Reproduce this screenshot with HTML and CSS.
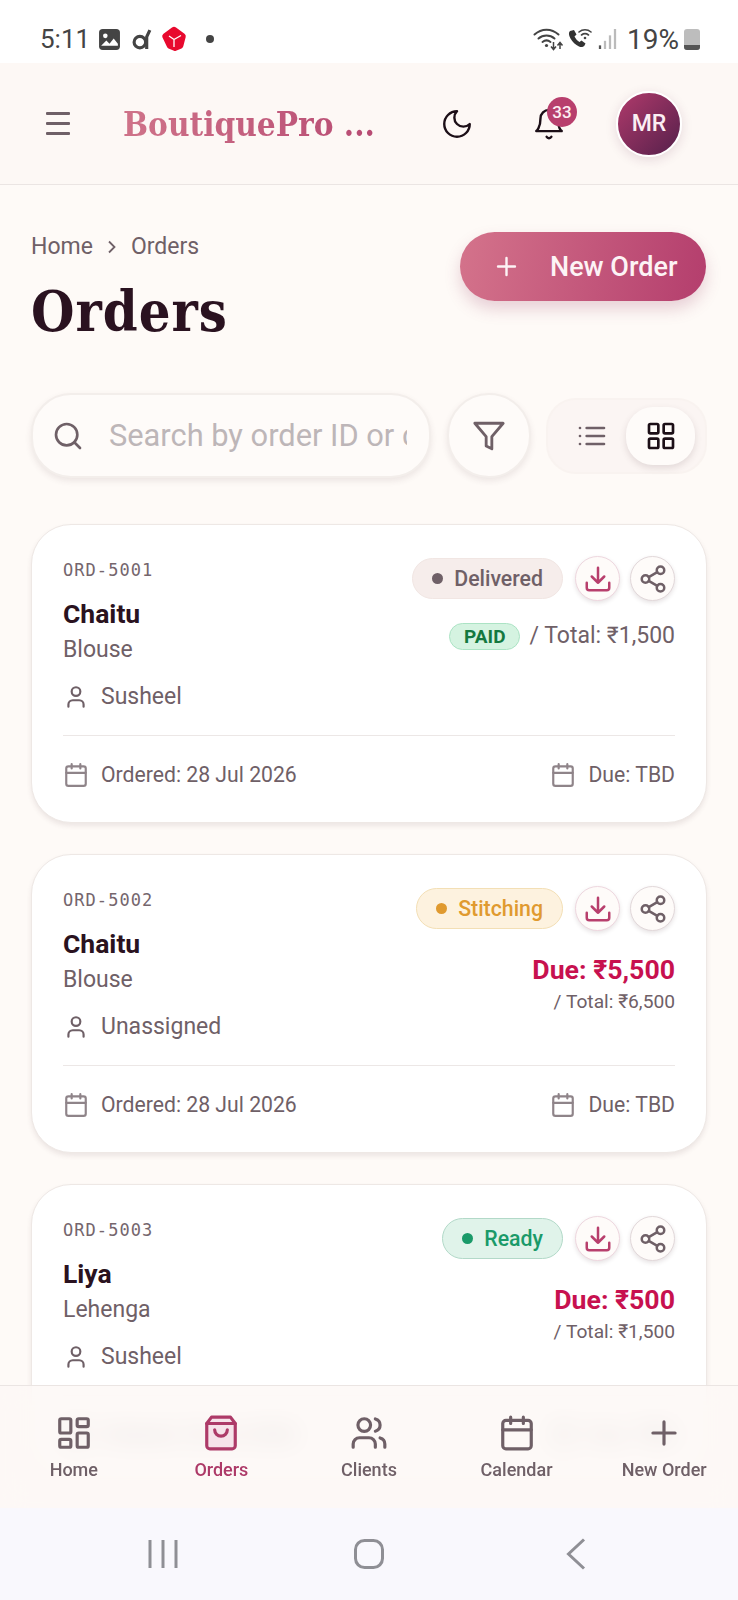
FILE: index.html
```html
<!DOCTYPE html>
<html lang="en">
<head>
    <meta charset="UTF-8">
    <meta name="viewport" content="width=device-width, initial-scale=1.0">
    <title>BoutiquePro - Orders</title>
    <link rel="stylesheet" href="styles.css">
</head>
<body>
    <!-- icon sprite -->
    <svg class="sprite" aria-hidden="true">
        <symbol id="i-moon" viewBox="0 0 24 24"><path d="M12 3a6 6 0 0 0 9 9 9 9 0 1 1-9-9Z"/></symbol>
        <symbol id="i-bell" viewBox="0 0 24 24"><path d="M6 8a6 6 0 0 1 12 0c0 7 3 9 3 9H3s3-2 3-9"/><path d="M10.3 21a1.94 1.94 0 0 0 3.4 0"/></symbol>
        <symbol id="i-search" viewBox="0 0 24 24"><circle cx="11" cy="11" r="8"/><path d="m21 21-4.3-4.3"/></symbol>
        <symbol id="i-filter" viewBox="0 0 24 24"><path d="M22 3H2l8 9.46V19l4 2v-8.54Z"/></symbol>
        <symbol id="i-list" viewBox="0 0 24 24"><path d="M3 12h.01M3 18h.01M3 6h.01M8 12h13M8 18h13M8 6h13"/></symbol>
        <symbol id="i-grid" viewBox="0 0 24 24"><rect x="3" y="3" width="7" height="7" rx="1"/><rect x="14" y="3" width="7" height="7" rx="1"/><rect x="14" y="14" width="7" height="7" rx="1"/><rect x="3" y="14" width="7" height="7" rx="1"/></symbol>
        <symbol id="i-user" viewBox="0 0 24 24"><path d="M19 21v-2a4 4 0 0 0-4-4H9a4 4 0 0 0-4 4v2"/><circle cx="12" cy="7" r="4"/></symbol>
        <symbol id="i-cal" viewBox="0 0 24 24"><path d="M8 2v4M16 2v4M3 10h18"/><rect x="3" y="4" width="18" height="18" rx="2"/></symbol>
        <symbol id="i-download" viewBox="0 0 24 24"><path d="M21 15v4a2 2 0 0 1-2 2H5a2 2 0 0 1-2-2v-4"/><path d="m7 10 5 5 5-5M12 15V3"/></symbol>
        <symbol id="i-share" viewBox="0 0 24 24"><circle cx="18" cy="5" r="3"/><circle cx="6" cy="12" r="3"/><circle cx="18" cy="19" r="3"/><path d="m8.59 13.51 6.83 3.98M15.41 6.51l-6.82 3.98"/></symbol>
        <symbol id="i-dash" viewBox="0 0 24 24"><rect x="3" y="3" width="7" height="9" rx="1"/><rect x="14" y="3" width="7" height="5" rx="1"/><rect x="14" y="12" width="7" height="9" rx="1"/><rect x="3" y="16" width="7" height="5" rx="1"/></symbol>
        <symbol id="i-bag" viewBox="0 0 24 24"><path d="M6 2 3 6v14a2 2 0 0 0 2 2h14a2 2 0 0 0 2-2V6l-3-4Z"/><path d="M3 6h18"/><path d="M16 10a4 4 0 0 1-8 0"/></symbol>
        <symbol id="i-users" viewBox="0 0 24 24"><path d="M16 21v-2a4 4 0 0 0-4-4H6a4 4 0 0 0-4 4v2"/><circle cx="9" cy="7" r="4"/><path d="M22 21v-2a4 4 0 0 0-3-3.87M16 3.13a4 4 0 0 1 0 7.75"/></symbol>
        <symbol id="i-plus" viewBox="0 0 24 24"><path d="M5 12h14M12 5v14"/></symbol>
    </svg>

    <div class="status-bar">
        <div class="status-left">
            <span class="status-time">5:11</span>
            <svg class="st-img" viewBox="0 0 22 22"><rect x="1" y="1" width="20" height="20" rx="3.5" fill="#444"/><circle cx="7" cy="7.5" r="2.2" fill="#fff"/><path d="M3 17l5-5 3 3 4-5 4 5v2H3z" fill="#fff"/></svg>
            <svg class="st-d" viewBox="0 0 20 20"><circle cx="7.5" cy="12.5" r="5.5" fill="none" stroke="#444" stroke-width="3"/><path d="M14 19V7.5L17 1" fill="none" stroke="#444" stroke-width="3"/></svg>
            <svg class="st-cube" viewBox="0 0 26 26"><path d="M11 1.500a3.400 3.400 0 0 1 4 0l8.500 6.200a3 3 0 0 1 1.200 3.200l-2.400 9.400a3 3 0 0 1-1.800 2.100l-5.500 2.300a3 3 0 0 1-2 0l-5.500-2.300a3 3 0 0 1-1.800-2.100L1.300 10.900a3 3 0 0 1 1.200-3.200z" fill="#e8092e"/><path d="M13 13.500V21M13 13.500l7-4M13 13.500 8 10" fill="none" stroke="#fff" stroke-width="1.300"/></svg>
            <span class="status-dot"></span>
        </div>
        <div class="status-right">
            <svg class="st-wifi" viewBox="0 0 30 24"><g fill="none" stroke="#444" stroke-width="2" stroke-linecap="round"><path d="M1 7.500c7-6.500 17-6.500 24 0"/><path d="M5 11.500c4.500-4 11.500-4 16 0"/><path d="M9 15c2.500-2 5.500-2 8 0"/></g><circle cx="13" cy="18.500" r="1.600" fill="#444"/><path d="M20 15v7m-2.500-2.500 2.500 3 2.500-3M26.500 22v-6m-2.500 2.500 2.500-3 2.500 3" fill="none" stroke="#444" stroke-width="1.500"/></svg>
            <svg class="st-call" viewBox="0 0 24 22"><path d="M2 3c-1.500 1.500-1.500 4 .5 7.500s5 6.500 8.500 8c2.500 1 4.500.5 5.500-1l1-2-4-3-2 1.500c-2-1-4-3.500-5-5.500l2-2-2.500-4.500z" fill="#333"/><g fill="none" stroke="#444" stroke-width="1.600" stroke-linecap="round"><path d="M11 4c3.500-3 8.500-3 12 0"/><path d="M13.500 7c2-1.500 5-1.500 7 0"/></g><circle cx="17" cy="10" r="1.300" fill="#444"/></svg>
            <svg class="st-signal" viewBox="0 0 19 22"><rect x="0" y="18" width="2.500" height="4" fill="#555"/><rect x="5.500" y="13" width="2.500" height="9" fill="#bbb"/><rect x="11" y="7" width="2.500" height="15" fill="#bbb"/><rect x="16.500" y="0" width="2.500" height="22" fill="#bbb"/></svg>
            <span class="status-batt">19%</span>
            <span class="battery"><span class="battery-low"></span></span>
        </div>
    </div>

    <header class="topbar">
        <button class="hamburger" aria-label="Menu"><span></span><span></span><span></span></button>
        <div class="brand">BoutiquePro ...</div>
        <button class="top-btn"><svg class="ic ic-34 dark thin"><use href="#i-moon"/></svg></button>
        <button class="top-btn bell">
            <svg class="ic ic-34 dark thin"><use href="#i-bell"/></svg>
            <span class="badge">33</span>
        </button>
        <div class="avatar">MR</div>
    </header>

    <div class="stage">
        <main class="content">
            <div class="page-head">
                <div>
                    <div class="crumbs">
                        Home
                        <svg class="crumb-sep" viewBox="0 0 10 14"><path d="M2 1.500 7.500 7 2 12.500"/></svg>
                        Orders
                    </div>
                    <h1>Orders</h1>
                </div>
                <button class="new-order"><svg class="ic ic-29"><use href="#i-plus"/></svg>New Order</button>
            </div>

            <div class="toolbar">
                <div class="search">
                    <svg class="ic ic-32"><use href="#i-search"/></svg>
                    <input class="search-input" type="text" placeholder="Search by order ID or client">
                </div>
                <button class="filter-btn"><svg class="ic ic-34"><use href="#i-filter"/></svg></button>
                <div class="view-toggle">
                    <span class="view-opt"><svg class="ic ic-32"><use href="#i-list"/></svg></span>
                    <span class="view-opt active"><svg class="ic ic-32 dark"><use href="#i-grid"/></svg></span>
                </div>
            </div>

            <section class="orders">
                <article class="card">
                    <div class="card-top">
                        <div class="card-info">
                            <div class="ord-id">ORD-5001</div>
                            <div class="client">Chaitu</div>
                            <div class="garment">Blouse</div>
                            <div class="assignee"><svg class="ic ic-26"><use href="#i-user"/></svg>Susheel</div>
                        </div>
                        <div class="card-side">
                            <div class="actions">
                                <span class="pill pill-delivered"><i></i>Delivered</span>
                                <button class="round dl"><svg class="ic ic-30"><use href="#i-download"/></svg></button>
                                <button class="round"><svg class="ic ic-30"><use href="#i-share"/></svg></button>
                            </div>
                            <div class="paid-row"><span class="paid">PAID</span><span>/ Total: ₹1,500</span></div>
                        </div>
                    </div>
                    <div class="card-foot">
                        <span class="foot-item"><svg class="ic ic-26 soft"><use href="#i-cal"/></svg>Ordered: 28 Jul 2026</span>
                        <span class="foot-item"><svg class="ic ic-26 soft"><use href="#i-cal"/></svg>Due: TBD</span>
                    </div>
                </article>

                <article class="card">
                    <div class="card-top">
                        <div class="card-info">
                            <div class="ord-id">ORD-5002</div>
                            <div class="client">Chaitu</div>
                            <div class="garment">Blouse</div>
                            <div class="assignee"><svg class="ic ic-26"><use href="#i-user"/></svg>Unassigned</div>
                        </div>
                        <div class="card-side">
                            <div class="actions">
                                <span class="pill pill-stitching"><i></i>Stitching</span>
                                <button class="round dl"><svg class="ic ic-30"><use href="#i-download"/></svg></button>
                                <button class="round"><svg class="ic ic-30"><use href="#i-share"/></svg></button>
                            </div>
                            <div class="due">Due: ₹5,500</div>
                            <div class="total">/ Total: ₹6,500</div>
                        </div>
                    </div>
                    <div class="card-foot">
                        <span class="foot-item"><svg class="ic ic-26 soft"><use href="#i-cal"/></svg>Ordered: 28 Jul 2026</span>
                        <span class="foot-item"><svg class="ic ic-26 soft"><use href="#i-cal"/></svg>Due: TBD</span>
                    </div>
                </article>

                <article class="card">
                    <div class="card-top">
                        <div class="card-info">
                            <div class="ord-id">ORD-5003</div>
                            <div class="client">Liya</div>
                            <div class="garment">Lehenga</div>
                            <div class="assignee"><svg class="ic ic-26"><use href="#i-user"/></svg>Susheel</div>
                        </div>
                        <div class="card-side">
                            <div class="actions">
                                <span class="pill pill-ready"><i></i>Ready</span>
                                <button class="round dl"><svg class="ic ic-30"><use href="#i-download"/></svg></button>
                                <button class="round"><svg class="ic ic-30"><use href="#i-share"/></svg></button>
                            </div>
                            <div class="due">Due: ₹500</div>
                            <div class="total">/ Total: ₹1,500</div>
                        </div>
                    </div>
                    <div class="card-foot">
                        <span class="foot-item"><svg class="ic ic-26 soft"><use href="#i-cal"/></svg>Ordered: 28 Jul 2026</span>
                        <span class="foot-item"><svg class="ic ic-26 soft"><use href="#i-cal"/></svg>Due: TBD</span>
                    </div>
                </article>
            </section>
        </main>

        <!-- sits over the list, the cards blur through it -->
        <nav class="bottom-nav">
            <a class="nav-item"><svg class="ic ic-38"><use href="#i-dash"/></svg>Home</a>
            <a class="nav-item active"><svg class="ic ic-38"><use href="#i-bag"/></svg>Orders</a>
            <a class="nav-item"><svg class="ic ic-38"><use href="#i-users"/></svg>Clients</a>
            <a class="nav-item"><svg class="ic ic-38"><use href="#i-cal"/></svg>Calendar</a>
            <a class="nav-item"><svg class="ic ic-38"><use href="#i-plus"/></svg>New Order</a>
        </nav>
    </div>

    <div class="system-nav">
        <svg class="sys-recent" viewBox="0 0 30 30"><path d="M2 1v28M15 1v28M28 1v28"/></svg>
        <svg class="sys-home" viewBox="0 0 30 30"><rect x="1.500" y="1.500" width="27" height="27" rx="9"/></svg>
        <svg class="sys-back" viewBox="0 0 20 32"><path d="M18 1.500 2.500 16 18 30.500"/></svg>
    </div>
</body>
</html>
```
FILE: styles.css
```css
* {
    margin: 0;
    padding: 0;
    box-sizing: border-box;
}

body {
    width: 738px;
    height: 1600px;
    display: flex;
    flex-direction: column;
    overflow: hidden;
    background: #fefaf7;
    color: #6f6067;
    font-family: Roboto, "Liberation Sans", sans-serif;
}

button {
    border: none;
    background: none;
    font-family: inherit;
    color: inherit;
}

.sprite {
    display: none;
}

/* icons */
.ic {
    display: block;
    flex-shrink: 0;
    fill: none;
    stroke: currentColor;
    stroke-width: 2;
    stroke-linecap: round;
    stroke-linejoin: round;
}
.ic-26 { width: 26px; height: 26px; }
.ic-29 { width: 29px; height: 29px; }
.ic-30 { width: 30px; height: 30px; }
.ic-32 { width: 32px; height: 32px; }
.ic-34 { width: 34px; height: 34px; }
.ic-38 { width: 38px; height: 38px; }
.dark { color: #1c0f17; }
.soft { color: #8f8489; }
.thin { stroke-width: 1.700; }

/* status bar */
.status-bar {
    height: 63px;
    flex-shrink: 0;
    background: #fff;
    display: flex;
    justify-content: space-between;
    align-items: center;
    padding: 15px 38px 0 40px;
    color: #444;
}
.status-left, .status-right {
    display: flex;
    align-items: center;
}
.status-time {
    font-size: 26px;
    width: 58px;
}
.st-img { width: 23px; height: 23px; margin-right: 11px; }
.st-d { width: 21px; height: 21px; margin-right: 8px; }
.st-cube { width: 26px; height: 26px; margin-right: 19px; }
.status-dot {
    width: 8px;
    height: 8px;
    border-radius: 50%;
    background: #444;
}
.st-wifi { width: 31px; height: 24px; margin-right: 4px; }
.st-call { width: 24px; height: 22px; margin-right: 6px; }
.st-signal { width: 19px; height: 20px; margin-right: 10px; }
.status-batt {
    font-size: 28px;
    margin-right: 5px;
}
.battery {
    width: 16px;
    height: 21px;
    border-radius: 3px;
    background: #bdbdbd;
    display: flex;
    align-items: flex-end;
    overflow: hidden;
}
.battery-low {
    width: 100%;
    height: 5px;
    background: #555;
}

/* top bar */
.topbar {
    height: 122px;
    flex-shrink: 0;
    display: flex;
    align-items: center;
    padding: 0 58px 0 46px;
    background: #fdf8f5;
    border-bottom: 1px solid #ebe5e3;
}
.hamburger {
    width: 24px;
    display: flex;
    flex-direction: column;
    gap: 7.500px;
    margin-right: 53px;
}
.hamburger span {
    height: 2.500px;
    background: #6f6067;
    border-radius: 1px;
}
.brand {
    flex: 1;
    font-family: "DejaVu Serif", "Liberation Serif", serif;
    font-stretch: condensed;
    font-weight: 700;
    font-size: 33px;
    line-height: 44px;
    padding-top: 2px;
    white-space: nowrap;
    background: linear-gradient(90deg, #cf7389, #b2426e);
    -webkit-background-clip: text;
    background-clip: text;
    color: transparent;
}
.top-btn {
    width: 50px;
    height: 50px;
    display: flex;
    align-items: center;
    justify-content: center;
    margin-right: 42px;
}
.bell {
    position: relative;
}
.badge {
    position: absolute;
    top: -2px;
    left: 23px;
    width: 30px;
    height: 30px;
    border-radius: 50%;
    background: #b83f6d;
    color: #fdeef3;
    font-size: 17px;
    font-weight: 500;
    line-height: 30px;
    text-align: center;
}
.avatar {
    width: 66px;
    height: 66px;
    margin-right: -2px;
    border: 2px solid #fff;
    border-radius: 50%;
    background: linear-gradient(135deg, #b03a6b, #55204b);
    box-shadow: 0 3px 12px rgba(90, 30, 70, 0.14);
    color: #fbeef3;
    font-size: 23px;
    font-weight: 500;
    line-height: 62px;
    text-align: center;
}

/* main area, nav is laid over its bottom part */
.stage {
    flex: 1;
    position: relative;
    overflow: hidden;
}
.content {
    padding: 47px 31px 0;
}
.page-head {
    display: flex;
    justify-content: space-between;
    align-items: flex-start;
}
.crumbs {
    margin-top: 2px;
    display: flex;
    align-items: center;
    font-size: 23px;
    line-height: 26px;
}
.crumb-sep {
    width: 10px;
    height: 14px;
    margin: 0 14px;
    fill: none;
    stroke: #6f6067;
    stroke-width: 1.800;
}
h1 {
    margin-top: 20px;
    font-family: "DejaVu Serif", "Liberation Serif", serif;
    font-stretch: condensed;
    font-size: 55.500px;
    font-weight: 700;
    letter-spacing: 1px;
    line-height: 64px;
    color: #2a1220;
}
.new-order {
    width: 246px;
    height: 69px;
    margin-right: 1px;
    display: flex;
    align-items: center;
    gap: 29px;
    padding-left: 32px;
    border-radius: 35px;
    background: linear-gradient(100deg, #d4738b, #b43e6d);
    box-shadow: 0 8px 16px rgba(150, 60, 95, 0.22);
    color: #fdf3f5;
    font-size: 27px;
    font-weight: 500;
}

.toolbar {
    display: flex;
    align-items: center;
    margin-top: 49px;
}
.search {
    width: 400px;
    height: 85px;
    display: flex;
    align-items: center;
    gap: 25px;
    padding-left: 19px;
    padding-right: 22px;
    border: 2px solid #f3eeeb;
    border-radius: 40px;
    background: #fefbf9;
    box-shadow: 0 3px 6px rgba(80, 50, 60, 0.1);
}
.search-input {
    flex: 1;
    min-width: 0;
    border: none;
    outline: none;
    background: none;
    font-family: inherit;
    font-size: 30.800px;
}
.search-input::placeholder {
    color: #bdb6b8;
    opacity: 1;
}
.filter-btn {
    width: 85px;
    height: 85px;
    margin-left: 16px;
    display: flex;
    align-items: center;
    justify-content: center;
    border: 2px solid #f3eeeb;
    border-radius: 42px;
    background: #fefbf9;
    box-shadow: 0 3px 6px rgba(80, 50, 60, 0.1);
}
.view-toggle {
    width: 161px;
    height: 76px;
    margin-left: 15px;
    display: flex;
    align-items: center;
    justify-content: space-between;
    padding: 0 10px 0 9px;
    border: 2px solid #f9f3f0;
    border-radius: 30px;
    background: #fbf5f3;
}
.view-opt {
    width: 70px;
    height: 58px;
    display: flex;
    align-items: center;
    justify-content: center;
    border-radius: 27px;
}
.view-opt.active {
    background: #fefbf9;
    box-shadow: 0 3px 7px rgba(80, 50, 60, 0.14);
}

/* order cards */
.orders {
    display: flex;
    flex-direction: column;
    gap: 31.200px;
    margin-top: 46px;
}
.card {
    padding: 32px 31px 32px;
    border: 1px solid #eee8e5;
    border-radius: 40px;
    background: #fff;
    box-shadow: 0 3px 5px rgba(80, 50, 60, 0.1);
}
.card-top {
    display: flex;
    justify-content: space-between;
}
.ord-id {
    font-family: "DejaVu Sans Mono", "Liberation Mono", monospace;
    font-size: 17px;
    letter-spacing: 1.050px;
    line-height: 26px;
    color: #75666d;
}
.client {
    margin-top: 16px;
    font-size: 26.500px;
    font-weight: 700;
    line-height: 30px;
    color: #2a1220;
}
.garment {
    margin-top: 7px;
    font-size: 23px;
    line-height: 28px;
}
.assignee {
    margin-top: 18px;
    display: flex;
    align-items: center;
    gap: 12px;
    font-size: 23px;
    line-height: 30px;
}
.card-side {
    display: flex;
    flex-direction: column;
    align-items: flex-end;
}
.actions {
    margin-top: -1px;
    display: flex;
    align-items: center;
    gap: 10px;
}
.pill {
    height: 41px;
    margin-right: 2px;
    display: flex;
    align-items: center;
    gap: 11px;
    padding: 0 19px;
    border: 1px solid;
    border-radius: 21px;
    font-size: 21.300px;
    font-weight: 500;
}
.pill i {
    width: 11px;
    height: 11px;
    border-radius: 50%;
    background: currentColor;
}
.pill-delivered { background: #f6edeb; border-color: #f1e6e3; color: #6f6067; }
.pill-stitching { background: #fdf2df; border-color: #f3dfb5; color: #e09a2f; }
.pill-ready { background: #e0f3ea; border-color: #b2d9c8; color: #1a9a69; }
.round {
    width: 45px;
    height: 45px;
    display: flex;
    align-items: center;
    justify-content: center;
    border: 1px solid #e2d8da;
    border-radius: 50%;
    background: #fefbf9;
    box-shadow: 0 2px 4px rgba(80, 50, 60, 0.14);
    color: #6f6067;
}
.round.dl {
    color: #b83f6d;
    border-color: #eed7df;
}
.paid-row {
    margin-top: 21px;
    display: flex;
    align-items: center;
    gap: 9px;
    font-size: 23px;
    line-height: 28px;
}
.paid {
    height: 27px;
    padding: 0 14px;
    border: 1px solid #abe3c4;
    border-radius: 14px;
    background: #d5f3e1;
    color: #14783f;
    font-size: 19px;
    font-weight: 700;
    line-height: 25px;
}
.due {
    margin-top: 23px;
    font-size: 26.700px;
    font-weight: 700;
    line-height: 32px;
    color: #c7114f;
}
.total {
    margin-top: 4px;
    font-size: 19.200px;
    line-height: 24px;
}
.card-foot {
    margin-top: 23px;
    padding-top: 24px;
    display: flex;
    justify-content: space-between;
    border-top: 1px solid #ece7e6;
    font-size: 21.200px;
    line-height: 30px;
}
.foot-item {
    display: flex;
    align-items: center;
    gap: 12px;
}

/* bottom nav */
.bottom-nav {
    position: absolute;
    left: 0;
    right: 0;
    bottom: 0;
    height: 123px;
    display: flex;
    padding-top: 28px;
    border-top: 1px solid #ebe5e3;
    background: rgba(253, 248, 245, 0.82);
    backdrop-filter: blur(12px);
}
.nav-item {
    flex: 1;
    display: flex;
    flex-direction: column;
    align-items: center;
    gap: 6px;
    font-size: 18px;
    font-weight: 500;
    line-height: 24px;
}
.nav-item.active {
    color: #ad3a68;
}
.nav-item.active .ic {
    fill: #f6e3ea;
}

/* android nav */
.system-nav {
    height: 92px;
    flex-shrink: 0;
    display: flex;
    align-items: center;
    justify-content: space-between;
    padding: 0 152px 0 148px;
    background: #f9f8fd;
}
.system-nav svg {
    fill: none;
    stroke: #8f8f95;
    stroke-width: 3;
}
.sys-recent { width: 30px; height: 30px; }
.sys-home { width: 30px; height: 30px; margin-right: 6px; }
.sys-back { width: 20px; height: 32px; }
```
